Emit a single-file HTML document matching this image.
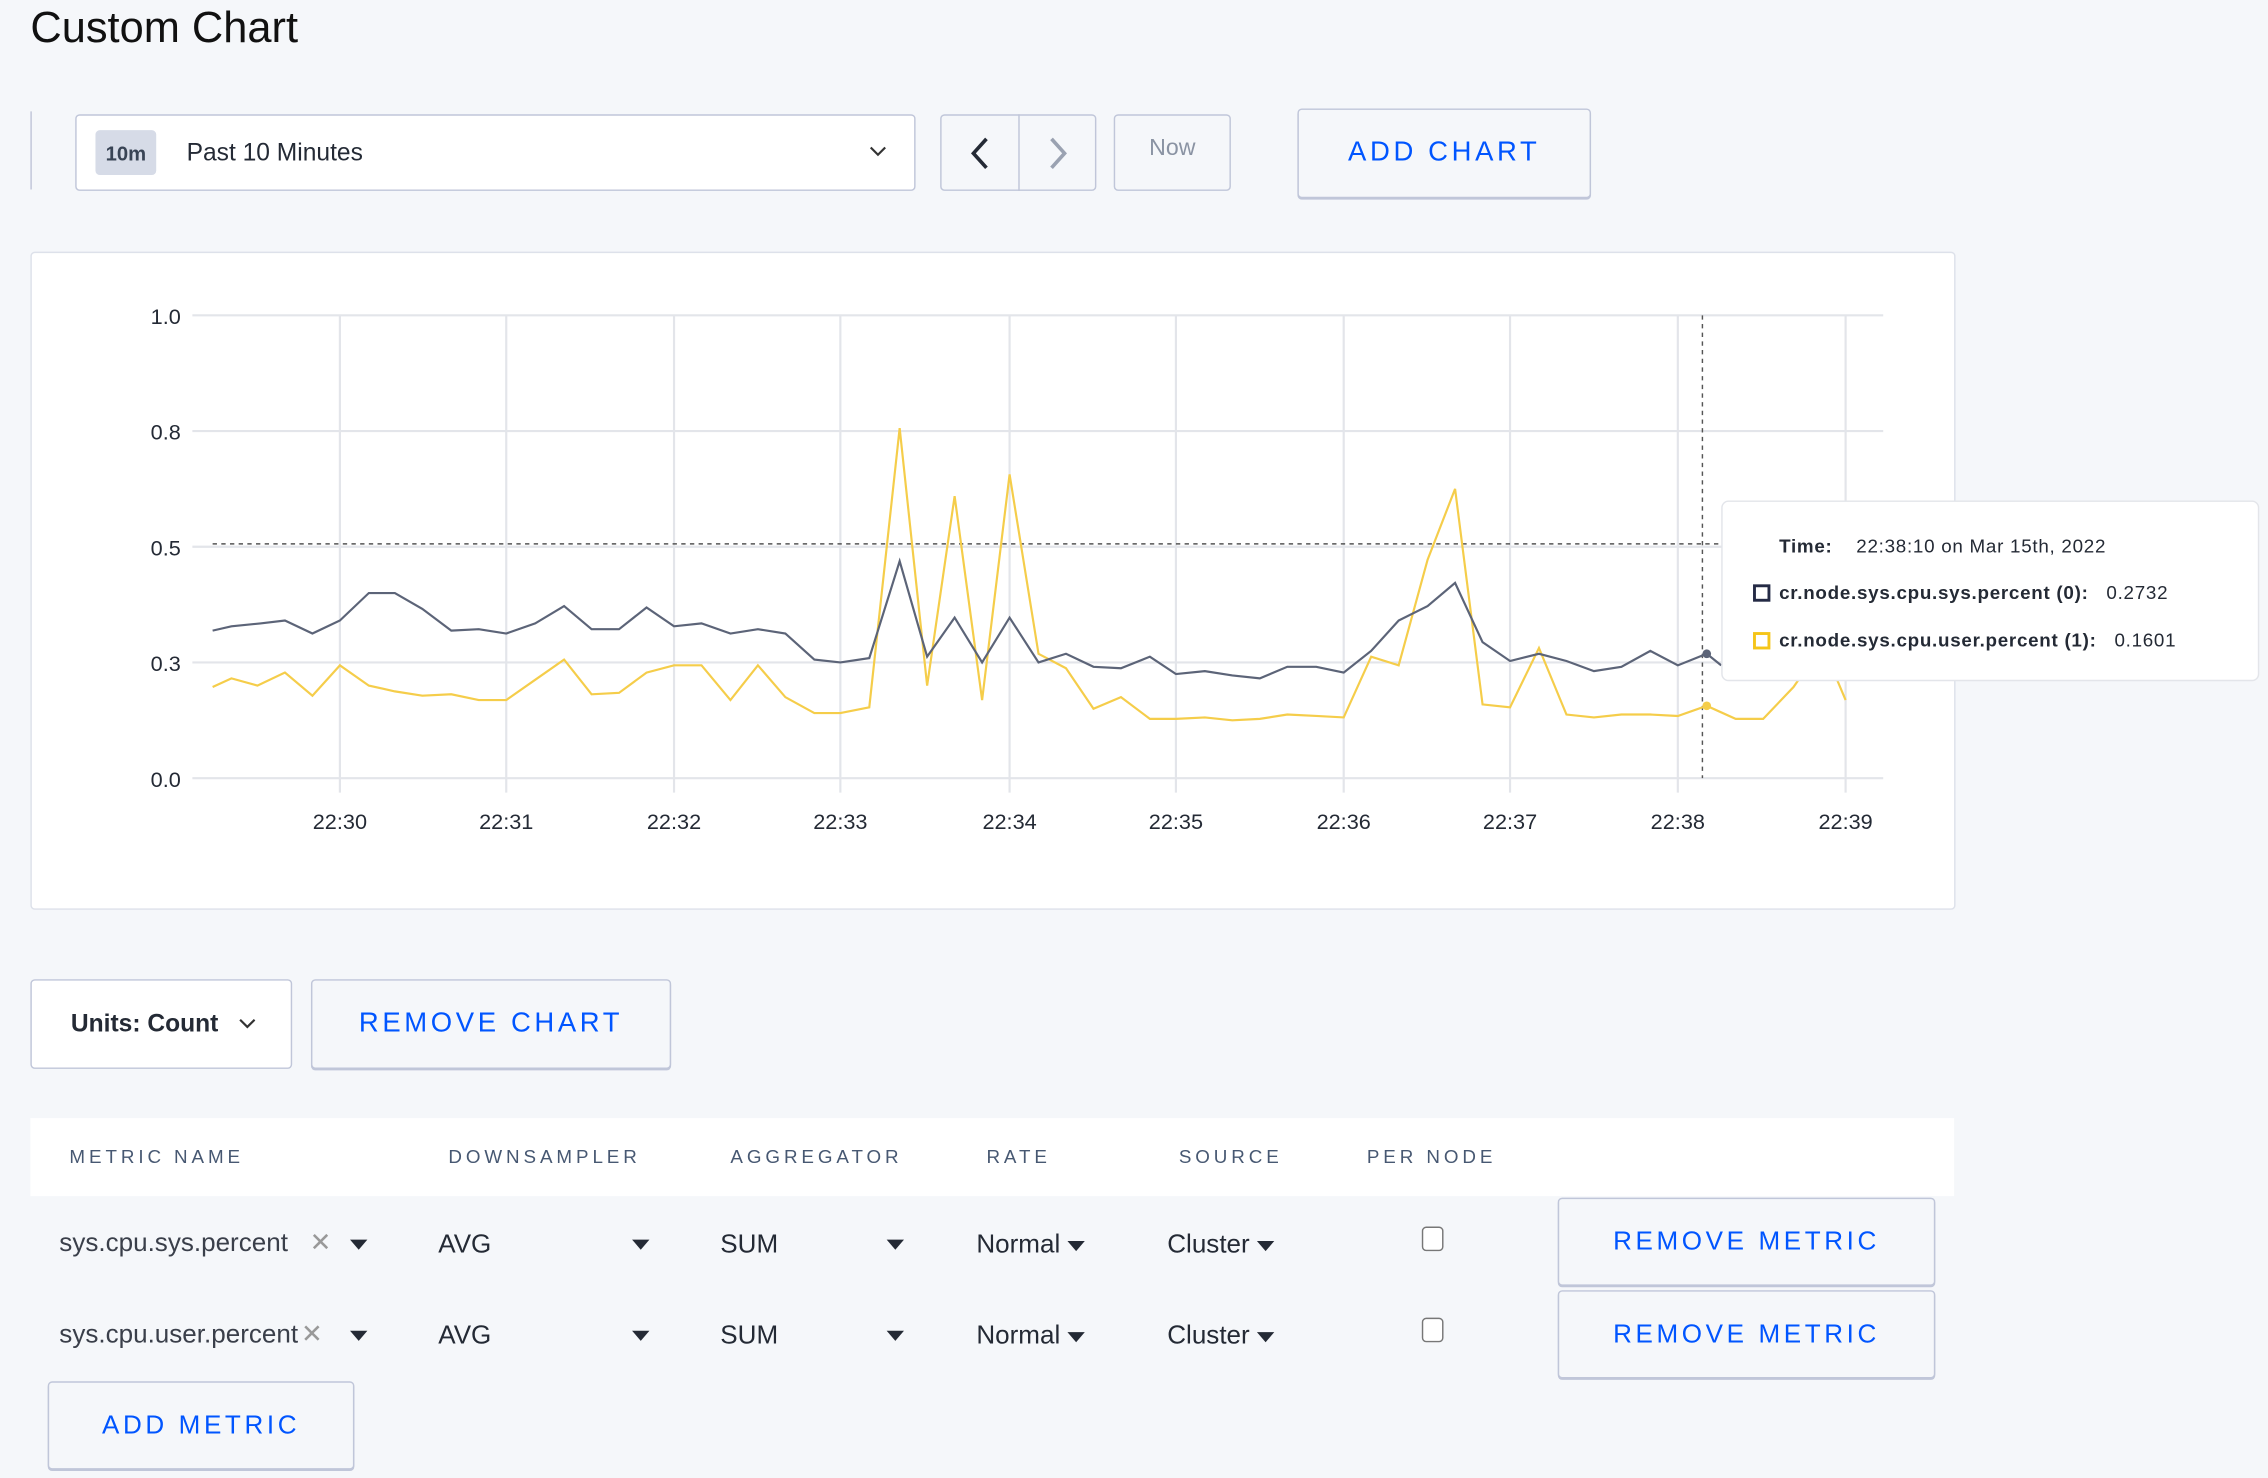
<!DOCTYPE html>
<html><head><meta charset="utf-8"><style>
html,body{margin:0;padding:0;background:#f5f7fa;overflow:hidden;width:2268px;height:1478px}
#w{position:absolute;left:0;top:0;width:1568px;height:1022px;transform:scale(1.4464);transform-origin:0 0;font-family:"Liberation Sans",sans-serif;color:#242a35}
.a{position:absolute;box-sizing:border-box}
.btn{border:1px solid #c0c6d9;border-radius:3px;background:#f5f7fa;color:#0055ff;letter-spacing:2.5px;font-size:18px;display:flex;align-items:center;justify-content:center;box-shadow:0 1px 0 #c0c6d9}
.hd{font-size:13px;letter-spacing:2.7px;color:#475872;top:792px}
.cell{font-size:18px;color:#242a35}
.tri{display:inline-block;width:0;height:0;border-left:6px solid transparent;border-right:6px solid transparent;border-top:7px solid #242a35;vertical-align:middle}
.cb{width:15px;height:17px;border:1.5px solid #777;border-radius:3px;background:#fff}
.ax{font-size:15px;fill:#242a35}
</style></head><body><div id="w">
<div class="a" style="left:21px;top:3px;font-size:30px;color:#111">Custom Chart</div>
<div class="a" style="left:21px;top:77px;width:1px;height:54px;background:#c0c6d9"></div>
<div class="a" style="left:52px;top:79px;width:581px;height:53px;border:1px solid #c0c6d9;border-radius:3px;background:#fff"></div>
<div class="a" style="left:66px;top:90px;width:42px;height:31px;background:#d6dbe7;border-radius:3px;font-size:14px;font-weight:bold;display:flex;align-items:center;justify-content:center;color:#394455">10m</div>
<div class="a" style="left:129px;top:96px;font-size:17px">Past 10 Minutes</div>
<svg class="a" style="left:601px;top:100px" width="12" height="10"><path d="M1 2 L6 7 L11 2" fill="none" stroke="#333" stroke-width="1.5"/></svg>
<div class="a" style="left:650px;top:79px;width:108px;height:53px;border:1px solid #c0c6d9;border-radius:3px;background:#f5f7fa"></div>
<div class="a" style="left:704px;top:79px;width:1px;height:53px;background:#c0c6d9"></div>
<svg class="a" style="left:668px;top:94px" width="20" height="24"><path d="M14 2 L5 12 L14 22" fill="none" stroke="#242a35" stroke-width="2.5"/></svg>
<svg class="a" style="left:722px;top:94px" width="20" height="24"><path d="M5 2 L14 12 L5 22" fill="none" stroke="#9aa2b1" stroke-width="2.5"/></svg>
<div class="a" style="left:770px;top:79px;width:81px;height:53px;border:1px solid #c0c6d9;border-radius:3px;color:#8a93a3;font-size:16px;display:flex;align-items:center;justify-content:center;padding-bottom:6px">Now</div>
<div class="a btn" style="left:897px;top:75px;width:203px;height:62px;font-size:19px">ADD CHART</div>

<div class="a" style="left:21px;top:174px;width:1331px;height:455px;background:#fff;border:1px solid #dde1ea;border-radius:3px"></div>
<svg class="a" style="left:0;top:0" width="1568" height="700">
<g stroke="#e3e5ea" stroke-width="1.5">
<line x1="133" y1="218" x2="1302" y2="218"/><line x1="133" y1="298" x2="1302" y2="298"/><line x1="133" y1="378" x2="1302" y2="378"/><line x1="133" y1="458" x2="1302" y2="458"/><line x1="133" y1="538" x2="1302" y2="538"/>
<line x1="235" y1="218" x2="235" y2="548"/><line x1="350" y1="218" x2="350" y2="548"/><line x1="466" y1="218" x2="466" y2="548"/><line x1="581" y1="218" x2="581" y2="548"/><line x1="698" y1="218" x2="698" y2="548"/><line x1="813" y1="218" x2="813" y2="548"/><line x1="929" y1="218" x2="929" y2="548"/><line x1="1044" y1="218" x2="1044" y2="548"/><line x1="1160" y1="218" x2="1160" y2="548"/><line x1="1276" y1="218" x2="1276" y2="548"/>
</g>
<g text-anchor="end"><text x="125" y="224" class="ax">1.0</text><text x="125" y="304" class="ax">0.8</text><text x="125" y="384" class="ax">0.5</text><text x="125" y="464" class="ax">0.3</text><text x="125" y="544" class="ax">0.0</text></g>
<g text-anchor="middle"><text x="235" y="573" class="ax">22:30</text><text x="350" y="573" class="ax">22:31</text><text x="466" y="573" class="ax">22:32</text><text x="581" y="573" class="ax">22:33</text><text x="698" y="573" class="ax">22:34</text><text x="813" y="573" class="ax">22:35</text><text x="929" y="573" class="ax">22:36</text><text x="1044" y="573" class="ax">22:37</text><text x="1160" y="573" class="ax">22:38</text><text x="1276" y="573" class="ax">22:39</text></g>
<line x1="147" y1="376" x2="1190" y2="376" stroke="#555" stroke-dasharray="3,3" stroke-width="1"/>
<line x1="1177" y1="218" x2="1177" y2="538" stroke="#555" stroke-dasharray="3,3" stroke-width="1"/>
<polyline fill="none" stroke="#f5cd4a" stroke-width="1.5" points="147,475 160,469 178,474 197,465 216,481 235,460 255,474 273,478 292,481 312,480 331,484 350,484 370,470 390,456 409,480 428,479 447,465 466,460 485,460 505,484 524,460 543,482 563,493 581,493 601,489 622,296 641,474 660,343 679,484 698,328 718,452 737,462 756,490 775,482 795,497 813,497 833,496 852,498 871,497 890,494 910,495 929,496 948,454 967,460 987,387 1006,338 1025,487 1044,489 1064,448 1083,494 1102,496 1121,494 1141,494 1160,495 1180,488 1200,497 1219,497 1240,475 1260,446 1276,484"/>
<polyline fill="none" stroke="#5c6478" stroke-width="1.5" points="147,436 160,433 180,431 197,429 216,438 235,429 255,410 273,410 292,421 312,436 331,435 350,438 370,431 390,419 409,435 428,435 447,420 466,433 485,431 505,438 524,435 543,438 563,456 581,458 601,455 622,388 641,454 660,427 679,458 698,427 718,458 737,452 756,461 775,462 795,454 813,466 833,464 852,467 871,469 890,461 910,461 929,465 948,450 967,429 987,419 1006,403 1025,444 1044,457 1064,452 1083,457 1102,464 1121,461 1141,450 1160,460 1180,452 1190,460"/>
<circle cx="1180" cy="452" r="3" fill="#5c6478"/><circle cx="1180" cy="488" r="3" fill="#f5cd4a"/>
</svg>
<div class="a" style="left:1190px;top:346px;width:372px;height:125px;background:#fff;border:1px solid #e3e5ea;border-radius:5px;font-size:13px;letter-spacing:0.5px;color:#242a35">
<div class="a" style="left:39px;top:23px;white-space:nowrap"><b>Time:</b>&nbsp;&nbsp;&nbsp; 22:38:10 on Mar 15th, 2022</div>
<div class="a" style="left:21px;top:57px;width:12px;height:12px;border:2px solid #242a45"></div>
<div class="a" style="left:39px;top:55px;white-space:nowrap"><b style="font-weight:600">cr.node.sys.cpu.sys.percent (0):</b>&nbsp;&nbsp; 0.2732</div>
<div class="a" style="left:21px;top:90px;width:12px;height:12px;border:2px solid #f5c518"></div>
<div class="a" style="left:39px;top:88px;white-space:nowrap"><b style="font-weight:600">cr.node.sys.cpu.user.percent (1):</b>&nbsp;&nbsp; 0.1601</div>
</div>

<div class="a" style="left:21px;top:677px;width:181px;height:62px;border:1px solid #c0c6d9;border-radius:3px;background:#fff;font-size:17px;font-weight:600;display:flex;align-items:center;padding-left:27px">Units: Count
<svg style="margin-left:14px" width="12" height="10"><path d="M1 2 L6 7 L11 2" fill="none" stroke="#333" stroke-width="1.5"/></svg></div>
<div class="a btn" style="left:215px;top:677px;width:249px;height:62px;font-size:19px">REMOVE CHART</div>

<div class="a" style="left:21px;top:773px;width:1330px;height:54px;background:#fff"></div>
<div class="a hd" style="left:48px">METRIC NAME</div>
<div class="a hd" style="left:310px">DOWNSAMPLER</div>
<div class="a hd" style="left:505px">AGGREGATOR</div>
<div class="a hd" style="left:682px">RATE</div>
<div class="a hd" style="left:815px">SOURCE</div>
<div class="a hd" style="left:945px">PER NODE</div>

<div class="a cell" style="left:41px;top:849px;color:#3a3f4a">sys.cpu.sys.percent <span style="color:#999;margin-left:10px">✕</span></div>
<div class="a" style="left:242px;top:852px"><span class="tri"></span></div>
<div class="a cell" style="left:303px;top:850px">AVG</div><div class="a" style="left:437px;top:852px"><span class="tri"></span></div>
<div class="a cell" style="left:498px;top:850px">SUM</div><div class="a" style="left:613px;top:852px"><span class="tri"></span></div>
<div class="a cell" style="left:675px;top:850px">Normal <span class="tri"></span></div>
<div class="a cell" style="left:807px;top:850px">Cluster <span class="tri"></span></div>
<div class="a cb" style="left:983px;top:848px"></div>
<div class="a btn" style="left:1077px;top:828px;width:261px;height:61px">REMOVE METRIC</div>

<div class="a cell" style="left:41px;top:912px;color:#3a3f4a">sys.cpu.user.percent<span style="color:#999;margin-left:2px">✕</span></div>
<div class="a" style="left:242px;top:915px"><span class="tri"></span></div>
<div class="a cell" style="left:303px;top:913px">AVG</div><div class="a" style="left:437px;top:915px"><span class="tri"></span></div>
<div class="a cell" style="left:498px;top:913px">SUM</div><div class="a" style="left:613px;top:915px"><span class="tri"></span></div>
<div class="a cell" style="left:675px;top:913px">Normal <span class="tri"></span></div>
<div class="a cell" style="left:807px;top:913px">Cluster <span class="tri"></span></div>
<div class="a cb" style="left:983px;top:911px"></div>
<div class="a btn" style="left:1077px;top:892px;width:261px;height:61px">REMOVE METRIC</div>

<div class="a btn" style="left:33px;top:955px;width:212px;height:61px">ADD METRIC</div>
</div></body></html>
